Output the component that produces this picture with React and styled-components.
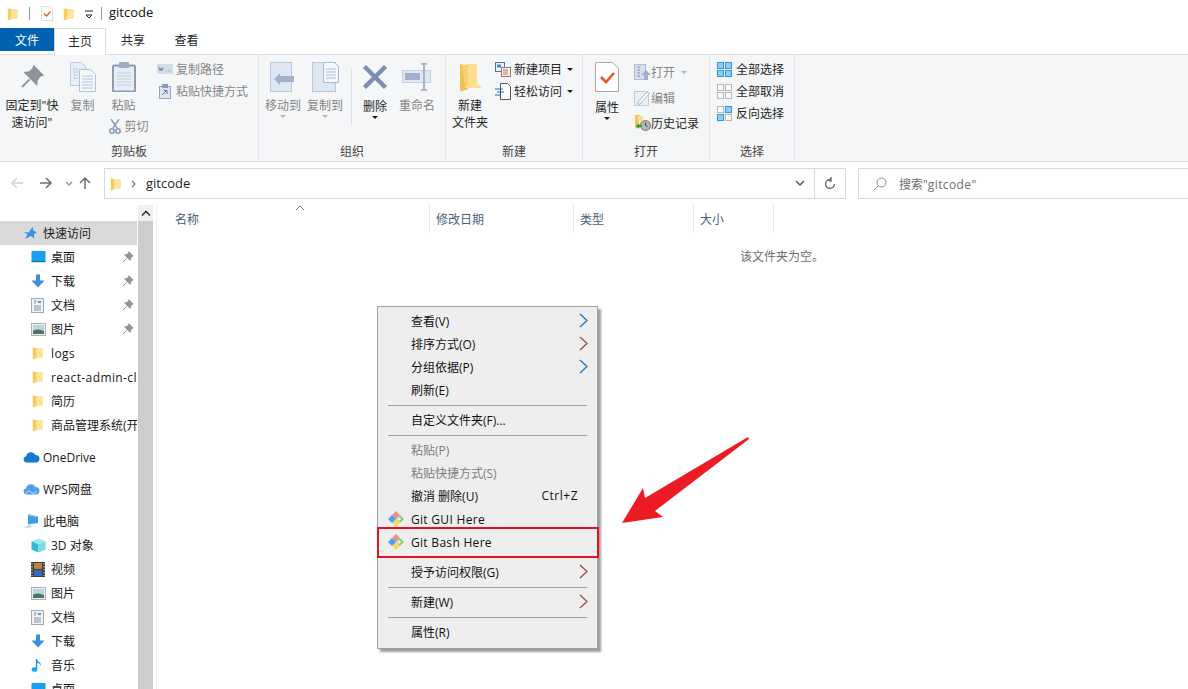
import React from "react";
import styled, { createGlobalStyle } from "styled-components";

const Global = createGlobalStyle`
  html, body { margin: 0; padding: 0; background: #fff; }
  body { font-family: "Open Sans", "Noto Sans CJK SC", sans-serif; font-size: 12px; color: #1a1a1a; }
  * { box-sizing: border-box; }
`;

const Page = styled.div`
  position: relative; width: 1188px; height: 689px; overflow: hidden; background: #fff;
  display: flex; flex-direction: column;
`;

/* title bar */
const TitleBar = styled.div`
  height: 27px; display: flex; align-items: center; padding-left: 6px; flex: none;
`;
const TitleSep = styled.span`
  width: 1px; height: 13px; background: #9b9b9b; margin: 0 ${p => p.$r}px 0 ${p => p.$l}px;
`;
const TitleText = styled.span`font-size: 13px; color: #111; line-height: 25px; height: 27px;`;
const TitleSlot = styled.span`display: flex; margin-right: ${p => p.$r || 0}px;`;

/* tabs */
const Tabs = styled.div`
  height: 28px; flex: none; display: flex; align-items: flex-start; padding-top: 1px;
  border-bottom: 1px solid #dadbdc; position: relative;
`;
const Tab = styled.div`
  height: ${p => (p.$active ? 27 : 23)}px; width: ${p => p.$w}px; display: flex; align-items: center;
  justify-content: center; padding-top: 2px; padding-bottom: ${p => (p.$active ? 3 : 0)}px; line-height: 1;
  background: ${p => (p.$file ? "#0063b1" : "transparent")};
  color: ${p => (p.$file ? "#fff" : "#262626")};
  ${p => p.$active && "background:#fff;border:1px solid #dadbdc;border-bottom:0;"}
`;

/* ribbon */
const Ribbon = styled.div`
  height: 107px; flex: none; display: flex; background: #f5f6f7; border-bottom: 1px solid #dadbdc;
`;
const Group = styled.div`
  width: ${p => p.$w}px; flex: none; display: flex; flex-direction: column; justify-content: space-between;
  border-right: 1px solid #e1e3e6; margin-bottom: 1px; padding-top: 3px;
`;
const GroupBody = styled.div`display: flex; padding-left: ${p => p.$pl || 0}px;`;
const GroupLabel = styled.div`text-align: center; color: #444; line-height: 19px; height: 18px;`;
const BigBtn = styled.div`
  width: ${p => p.$w}px; flex: none; display: flex; flex-direction: column; align-items: center;
  color: ${p => (p.$off ? "#858585" : "#262626")}; line-height: 17px; text-align: center;
  white-space: nowrap;
`;
const BigIcon = styled.div`
  height: ${p => 39 + (p.$lift || 0)}px; padding-bottom: ${p => 1 + (p.$lift || 0)}px; width: 100%; flex: none;
  display: flex; align-items: center; justify-content: center;
`;
const Drop = styled.span`
  width: 0; height: 0; border: 3px solid transparent; border-bottom: 0;
  border-top-color: ${p => (p.$off ? "#b5b5b5" : "#1a1a1a")}; margin-top: 1px; display: block;
  margin-left: ${p => p.$ml || 0}px;
`;
const SmallCol = styled.div`
  display: flex; flex-direction: column; flex: none; padding-top: ${p => p.$pt || 0}px; padding-left: ${p => p.$pl || 0}px; gap: ${p => p.$gap || 0}px;
`;
const SmallBtn = styled.div`
  height: 22px; display: flex; align-items: center; gap: ${p => p.$gap ?? 3}px; white-space: nowrap;
  color: ${p => (p.$off ? "#858585" : "#262626")}; padding-left: ${p => p.$pl || 0}px;
`;
const VSep = styled.div`width: 1px; height: 55px; background: #dcdee1; margin: 11px 0 0 ${p => p.$ml}px; flex: none;`;
const Cut = styled(SmallBtn)`margin-top: 1px; margin-left: 10px;`;
const PasteCol = styled.div`display:flex;flex-direction:column;align-items:center;width:${p => p.$w}px;flex:none;`;

/* address */
const AddressRow = styled.div`height: 43px; flex: none; display: flex; align-items: flex-start; padding-top: 6px;`;
const Nav = styled.div`width: 104px; height: 30px; flex: none; display: flex; align-items: center; padding-left: 10px;`;
const NavSlot = styled.span`display: flex; margin-left: ${p => p.$l || 0}px;`;
const AddressBox = styled.div`
  width: 742px; height: 31px; flex: none; border: 1px solid #d9d9d9; display: flex; align-items: center; padding-left: 4px;
`;
const Crumb = styled.span`flex: 1; font-size: 13px; color: #1f1f1f; margin-left: 9px; padding-bottom: 2px;`;
const AddrBtn = styled.div`
  width: ${p => p.$w}px; height: 100%; display: flex; align-items: center; justify-content: center;
  ${p => p.$line && "border-left:1px solid #d9d9d9;"}
`;
const SearchBox = styled.div`
  margin-left: 12px; flex: 1; height: 31px; border: 1px solid #d9d9d9; border-right: 0; display: flex; align-items: center;
  padding-left: 14px; gap: 12px; color: #6d6d6d;
`;
const Wide = styled.span`letter-spacing: .4px;`;

/* main */
const Main = styled.div`flex: 1; display: flex; min-height: 0;`;
const Side = styled.div`width: 138px; flex: none; padding-top: 16px; overflow: hidden;`;
const Row = styled.div`
  height: 24px; width: 137px; display: flex; align-items: center; white-space: nowrap; overflow: hidden;
  padding-left: ${p => (p.$top ? 23 : 31)}px; margin-top: ${p => (p.$gap ? 8 : 0)}px;
  background: ${p => (p.$sel ? "#d9d9d9" : "transparent")}; color: #1a1a1a; flex: none;
`;
const RowIcon = styled.span`width: 20px; flex: none; display: flex;`;
const RowText = styled.span`flex: 1; overflow: hidden; min-width: 0;`;
const PinSlot = styled.span`display: flex; flex: none; padding-right: 3px;`;
const Scroll = styled.div`width: 15px; flex: none; background: #cdcdcd; display: flex; flex-direction: column;`;
const ScrollTop = styled.div`height: 16px; background: #f0f0f0; display: flex; align-items: center; justify-content: center;`;
const Pane = styled.div`flex: 1; border-left: 1px solid #f0f0f0; margin-left: 3px; min-width: 0;`;
const Head = styled.div`display: flex; height: 28px; position: relative;`;
const HeadCell = styled.div`
  width: ${p => p.$w}px; flex: none; padding-left: ${p => p.$pl || 6}px; color: #4c607a; line-height: 30px;
  border-right: 1px solid #e5e5e5;
`;
const SortCaret = styled.svg`position: absolute; left: 138px; top: 0;`;
const Empty = styled.div`padding: 15px 0 0 583px; color: #6d6d6d; line-height: 18px;`;

/* menu */
const Menu = styled.div`
  position: absolute; left: 377px; top: 306px; width: 221px; height: 343px; padding-top: 3px;
  background: #eeeeee; border: 1px solid #a0a0a0; box-shadow: 3px 3px 2px rgba(0,0,0,.38);
`;
const Item = styled.div`
  height: 23px; display: flex; align-items: center; padding-left: 33px; position: relative;
  padding-bottom: ${p => (p.$git ? 0 : 2)}px;
  letter-spacing: ${p => (p.$git ? ".3px" : "0")};
  color: ${p => (p.$off ? "#7d7d7d" : "#111")}; white-space: nowrap;
`;
const Short = styled.span`position: absolute; right: 19px; letter-spacing: .5px;`;
const Chevron = styled.svg`position: absolute; left: 201px; top: 3px;`;
const GitSlot = styled.span`position: absolute; left: 9px; top: 2px; display: flex;`;
const MenuSep = styled.div`height: 7px; margin: 0 10px; display: flex; align-items: center; &::after { content: ""; flex: 1; height: 1px; background: #a0a0a0; }`;
const MenuGap = styled.div`height: 7px;`;
const RedBox = styled.div`position: absolute; left: -1px; top: 220px; width: 222px; height: 31px; border: 2px solid #e81123;`;
const ArrowSvg = styled.svg`position: absolute; left: 620px; top: 435px;`;

/* icons */
const Folder = ({ s = 16 }) => (
  <svg width={s} height={s} viewBox="0 0 16 16">
    <path d="M2 1.500 L7 2.500 V14 L2 15.500 Z" fill="#f6cd63" />
    <path d="M6 2.500 H13.500 V13.500 H3.500 L6 12 Z" fill="#fde39a" />
  </svg>
);
const Pin = ({ s = 12, c = "#8d949c" }) => (
  <svg width={s} height={s} viewBox="0 0 12 12"><path d="M7 .8 11.2 5 9.800 5.600 8.400 7.600 8.200 9.400 2.700 3.900 4.600 3.600 6.500 2.200Z M4.800 7.200 1 11" fill={c} stroke={c} strokeWidth="1" /></svg>
);
const QuickStar = () => (
  <svg width="14" height="14" viewBox="0 0 14 14"><path d="M9.500 .8 10.500 4.800 14 6l-3 2.300.2 4.200-3.300-2.400L2.200 13 4.500 8.500 1 6.200l5 .1Z" fill="#3a94e3" /></svg>
);
const Desk = () => (
  <svg width="15" height="14" viewBox="0 0 15 14"><rect x=".5" y="1" width="14" height="11" rx="1" fill="#18a0f0" /><path d="M.5 11h14v1.200H.5z" fill="#0d6fb8" /></svg>
);
const Down = ({ w = 14 }) => (
  <svg width={w} height="14" viewBox="0 0 14 14"><path d="M5 .5h4v6h4.500L7 13.500.5 6.500H5Z" fill="#3b8edb" /></svg>
);
const Doc = () => (
  <svg width="13" height="15" viewBox="0 0 13 15"><rect x=".5" y=".5" width="12" height="14" fill="#f3f3f3" stroke="#a9a9a9" /><path d="M3 3h3M3 5h2M3 8h7M3 10h7M3 12h7" stroke="#7f9bb5" /><path d="M7 3h3v2H7z" fill="#4e9bd8" /></svg>
);
const Pic = () => (
  <svg width="15" height="13" viewBox="0 0 15 13"><rect x=".5" y=".5" width="14" height="12" fill="#eee" stroke="#b0b0b0" /><rect x="2" y="2" width="11" height="9" fill="#b9d3e0" /><path d="M2 8c3-2 7-2 11 0v3H2Z" fill="#4c7363" /></svg>
);
const Cloud = ({ c = "#1479cf" }) => (
  <svg width="17" height="12" viewBox="0 0 17 12"><path d="M3.500 11.500a3.200 3.200 0 0 1-.4-6.300 5 5 0 0 1 9.400-1.200A3.800 3.800 0 0 1 13.500 11.500Z" fill={c} /></svg>
);
const Wps = () => (
  <svg width="17" height="12" viewBox="0 0 17 12"><path d="M3.500 11.500a3.200 3.200 0 0 1-.4-6.300 5 5 0 0 1 9.400-1.200A3.800 3.800 0 0 1 13.500 11.500Z" fill="#4d9df0" /><path d="M3 11c1-3 3-4 5-2s4 1 6-1" stroke="#cfe6ff" fill="none" /></svg>
);
const PC = () => (
  <svg width="16" height="16" viewBox="0 0 16 16"><path d="M5 1l10 2.500V10L5 11.500Z" fill="#3aa0e0" /><path d="M5 1l10 2.500-1 .6L5 2.500Z" fill="#9fd4f5" /><path d="M0 14l7-2 4 1-6 2.400Z" fill="#d8d8d8" /></svg>
);
const Obj3D = () => (
  <svg width="15" height="15" viewBox="0 0 15 15"><path d="M7.500 .5l7 2.800-7 3-7-3Z" fill="#9be8ee" /><path d="M.5 3.300l7 3v8.200l-7-3Z" fill="#2ec0d0" /><path d="M14.500 3.300l-7 3v8.200l7-3Z" fill="#7adbe4" /></svg>
);
const Film = () => (
  <svg width="14" height="15" viewBox="0 0 14 15"><rect width="14" height="15" fill="#3d3d3d" /><rect x="3" y="1" width="8" height="6" fill="#c0813f" /><rect x="3" y="8" width="8" height="6" fill="#3567c4" /><path d="M1 1v13M13 1v13" stroke="#ddd" strokeDasharray="1.500 1.500" /></svg>
);
const Note = () => (
  <svg width="13" height="15" viewBox="0 0 13 15"><path d="M5.500 1v10" stroke="#1aa0ee" strokeWidth="1.500" /><path d="M5.500 1c1 3 5 3 4.500 7-.8-2.400-2.500-3-4.500-3.500Z" fill="#1aa0ee" /><ellipse cx="3.500" cy="11.500" rx="2.800" ry="2.300" fill="#1aa0ee" /></svg>
);

const BigDoc = ({ o = 1 }) => (
  <svg width="26" height="30" viewBox="0 0 26 30" opacity={o}>
    <path d="M.5.5h11l4 4v19H.5Z" fill="#e9eff8" stroke="#bac8dc" />
    <path d="M9.500 7.500h11l5 5v17h-16Z" fill="#f4f7fb" stroke="#b0c0d8" />
    <path d="M3 7h5M3 10h5M3 13h5M3 16h5M12 14h11M12 17h11M12 20h11M12 23h11M12 26h11" stroke="#b4c4dc" />
  </svg>
);
const Clip = () => (
  <svg width="24" height="30" viewBox="0 0 24 30">
    <rect x="1" y="3.500" width="22" height="26" rx="1" fill="#e7ecf5" stroke="#8b9db9" strokeWidth="2" />
    <rect x="7" y="0" width="10" height="6" fill="#9fafc6" />
    <path d="M5 11h14M5 14h14M5 17h14M5 20h14M5 23h14" stroke="#c4d0e2" />
  </svg>
);
const MoveIco = () => (
  <svg width="26" height="30" viewBox="0 0 26 30">
    <rect x=".5" y=".5" width="21" height="29" fill="#dde6f3" stroke="#b8c7dc" />
    <path d="M10 17l-6 6 6 6v-3h14v-6H10Z" fill="#9fb2ca" transform="translate(0,-6)" />
  </svg>
);
const CopyToIco = () => (
  <svg width="27" height="30" viewBox="0 0 27 30">
    <rect x=".5" y=".5" width="23" height="29" fill="#dde6f3" stroke="#b8c7dc" />
    <path d="M11.500 .5h11l4 4v16h-15Z" fill="#f4f7fb" stroke="#a9b9d0" />
    <path d="M14 7h10M14 10h10M14 13h10M14 16h10" stroke="#a9b9d0" />
  </svg>
);
const XIco = () => (
  <svg width="26" height="26" viewBox="0 0 26 26"><path d="M2.500 2.500 23.500 23.500M23.500 2.500 2.500 23.500" stroke="#7b8db0" strokeWidth="4.500" /></svg>
);
const RenameIco = () => (
  <svg width="30" height="28" viewBox="0 0 30 28">
    <rect x=".5" y="7.500" width="28" height="12" fill="#dfe7f3" stroke="#c3d0e1" />
    <rect x="3" y="10" width="15" height="7" fill="#9fb1cd" />
    <path d="M19 .8h6M22 1v26M19 27h6" stroke="#a7b5c9" strokeWidth="2" />
  </svg>
);
const BigFolder = () => (
  <svg width="22" height="29" viewBox="0 0 22 29">
    <path d="M1 1l8 2v23l-7 2.500L1 27Z" fill="#f0c14e" />
    <path d="M7 1h11v20l4 2v2H5l3-2Z" fill="#fde08f" />
    <path d="M3 2h6v20l-3 2Z" fill="#f8d271" />
  </svg>
);
const CheckDoc = ({ w = 24, h = 30 }) => (
  <svg width={w} height={h} viewBox="0 0 24 30">
    <path d="M.5.5h17l6 6v23H.5Z" fill="#fff" stroke="#a9a9a9" />
    <path d="M6 15l5 5 8-9" fill="none" stroke="#e8562a" strokeWidth="2.600" />
  </svg>
);
const PathIco = () => (
  <svg width="16" height="10" viewBox="0 0 16 10"><rect width="16" height="10" fill="#d3dce9" /><path d="M2 3l1 4 1-3 1 3 1-4M9 7h.8M11 7h.8M13 7h.8" stroke="#6f7f97" fill="none" strokeWidth=".8" /></svg>
);
const ShortIco = () => (
  <svg width="12" height="15" viewBox="0 0 12 15"><rect x=".5" y="2.500" width="11" height="12" fill="#dfe6f1" stroke="#92a3bc" /><rect x="3" y="0" width="6" height="4" fill="#8b9db9" /><path d="M3 11l4-4M5 6.500h3V10" stroke="#5c7396" fill="none" /></svg>
);
const Scissors = () => (
  <svg width="12" height="15" viewBox="0 0 12 15"><path d="M2 0l6 9M10 0 4 9" stroke="#8e9db3" strokeWidth="1.500" /><circle cx="3" cy="12" r="2.200" fill="none" stroke="#8697b0" strokeWidth="1.500" /><circle cx="9" cy="12" r="2.200" fill="none" stroke="#8697b0" strokeWidth="1.500" /></svg>
);
const NewItem = () => (
  <svg width="16" height="15" viewBox="0 0 16 15"><rect x=".5" y=".5" width="9" height="9" fill="#e8f0f8" stroke="#5d7180" /><rect x="2" y="2.500" width="4" height="3" fill="#3f8fd4" /><rect x="6.500" y="5.500" width="9" height="9" fill="#f6f0ee" stroke="#8c7a80" /><path d="M8 8h5M8 10h5M8 12h5" stroke="#d36c4f" /></svg>
);
const EasyIco = () => (
  <svg width="16" height="17" viewBox="0 0 16 17"><path d="M5.500 .5h7l3 3v13h-10Z" fill="#fff" stroke="#555" /><path d="M0 6h8M2 9h7M0 12h6" stroke="#1c6fb5" /></svg>
);
const OpenIco = () => (
  <svg width="17" height="16" viewBox="0 0 17 16"><rect x=".5" y=".5" width="11" height="15" fill="#d6dfeb" stroke="#b0bdcf" /><path d="M3 3h3M3 6h3M3 9h3M3 12h3" stroke="#7f92ad" /><path d="M12 6l5 5h-3v5h-4v-5H7Z" fill="#9fb1c9" /></svg>
);
const EditIco = () => (
  <svg width="16" height="16" viewBox="0 0 16 16"><path d="M.5 1.500h11l3 .5v13.500H.5Z" fill="#eaf0f7" stroke="#bccadc" /><path d="M4 12l9-10 2.500 1.500L6 14l-2 .5Z" fill="#fff" stroke="#a8b9cf" /></svg>
);
const History = () => (
  <svg width="17" height="16" viewBox="0 0 17 16"><path d="M1 0h5v13H1Z" fill="#f2c652" /><path d="M4 1h5v11H4Z" fill="#fde08f" /><circle cx="11.500" cy="10.500" r="5" fill="#b5b5b5" stroke="#777" /><path d="M11.500 7.500v3l2 1" stroke="#444" fill="none" /><path d="M2 11l3-3v2h3v2H5v2Z" fill="#2e9e3a" /></svg>
);
const Grid4 = ({ on = [1, 1, 1, 1] }) => (
  <svg width="15" height="15" viewBox="0 0 15 15">
    {[[0, 0], [8, 0], [0, 8], [8, 8]].map(([x, y], i) => (
      <rect key={i} x={x + 0.5} y={y + 0.5} width="6" height="6" fill={on[i] ? "#8ecbf6" : "#fafafa"} stroke={on[i] ? "#2f95e6" : "#b9b9b9"} />
    ))}
  </svg>
);
const ChevronRight = ({ c }) => (
  <Chevron width="9" height="15" viewBox="0 0 9 15"><path d="M1 1l7 6.500-7 6.500" fill="none" stroke={c} strokeWidth="1.200" /></Chevron>
);
const GitLogo = () => (
  <svg width="18" height="18" viewBox="0 0 18 18">
    <path d="M9 1l4 4-4 4-4-4Z" fill="#f28c8c" />
    <path d="M13 5l4 4-4 4-4-4Z" fill="#86d06a" />
    <path d="M9 9l4 4-4 4-4-4Z" fill="#f9da5b" />
    <path d="M5 5l4 4-4 4-4-4Z" fill="#4f9ef5" />
    <path d="M10.500 7.500h3v3h-3z" fill="#eee" transform="rotate(45 12 9)" />
  </svg>
);
const Small = ({ d, c = "#666", w = 14, h = 14, vb = "0 0 14 14", sw = 1.500 }) => (
  <svg width={w} height={h} viewBox={vb}><path d={d} fill="none" stroke={c} strokeWidth={sw} /></svg>
);

const quick = [
  [<Desk />, "桌面", 1], [<Down />, "下载", 1], [<Doc />, "文档", 1], [<Pic />, "图片", 1],
  [<Folder s={14} />, <Wide>logs</Wide>, 0, "logs"], [<Folder s={14} />, <Wide>react-admin-client</Wide>, 0, "react"], [<Folder s={14} />, "简历"], [<Folder s={14} />, "商品管理系统(开发中)"],
];
const pc = [
  [<Obj3D />, "3D 对象"], [<Film />, "视频"], [<Pic />, "图片"], [<Doc />, "文档"], [<Down />, "下载"], [<Note />, "音乐"], [<Desk />, "桌面"],
];

export default function App() {
  return (
    <Page>
      <Global />
      <TitleBar>
        <TitleSlot><Folder s={14} /></TitleSlot>
        <TitleSep $l={9} $r={11} />
        <TitleSlot $r={9}><CheckDoc w={12} h={15} /></TitleSlot>
        <TitleSlot $r={8}><Folder s={14} /></TitleSlot>
        <TitleSlot $r={7}><Small d="M1 2h8M2 6h6l-3 3Z" c="#222" w={10} h={10} vb="0 0 10 10" sw={1} /></TitleSlot>
        <TitleSep $l={0} $r={7} />
        <TitleText>gitcode</TitleText>
      </TitleBar>
      <Tabs>
        <Tab $file $w={54}>文件</Tab>
        <Tab $active $w={52}>主页</Tab>
        <Tab $w={54}>共享</Tab>
        <Tab $w={53}>查看</Tab>
      </Tabs>
      <Ribbon>
        <Group $w={259}>
          <GroupBody>
            <BigBtn $w={64}><BigIcon><Pin s={24} /></BigIcon>固定到"快<br />速访问"</BigBtn>
            <BigBtn $w={37} $off><BigIcon><BigDoc /></BigIcon>复制</BigBtn>
            <PasteCol $w={45}>
              <BigBtn $w={45} $off><BigIcon><Clip /></BigIcon>粘贴</BigBtn>
              <Cut $off $gap={4}><Scissors />剪切</Cut>
            </PasteCol>
            <SmallCol $pl={11}>
              <SmallBtn $off><PathIco />复制路径</SmallBtn>
              <SmallBtn $off $gap={5} $pl={2}><ShortIco />粘贴快捷方式</SmallBtn>
            </SmallCol>
          </GroupBody>
          <GroupLabel>剪贴板</GroupLabel>
        </Group>
        <Group $w={187}>
          <GroupBody $pl={3}>
            <BigBtn $w={42} $off><BigIcon><MoveIco /></BigIcon>移动到<Drop $off /></BigBtn>
            <BigBtn $w={42} $off><BigIcon><CopyToIco /></BigIcon>复制到<Drop $off /></BigBtn>
            <VSep $ml={5} />
            <BigBtn $w={46}><BigIcon $lift={1}><XIco /></BigIcon>删除<Drop /></BigBtn>
            <BigBtn $w={38} $off><BigIcon><RenameIco /></BigIcon>重命名</BigBtn>
          </GroupBody>
          <GroupLabel>组织</GroupLabel>
        </Group>
        <Group $w={137}>
          <GroupBody>
            <BigBtn $w={48}><BigIcon><BigFolder /></BigIcon>新建<br />文件夹</BigBtn>
            <SmallCol $pl={1}>
              <SmallBtn><NewItem />新建项目<Drop $ml={2} /></SmallBtn>
              <SmallBtn><EasyIco />轻松访问<Drop $ml={2} /></SmallBtn>
            </SmallCol>
          </GroupBody>
          <GroupLabel>新建</GroupLabel>
        </Group>
        <Group $w={127}>
          <GroupBody>
            <BigBtn $w={48}><BigIcon $lift={2}><CheckDoc /></BigIcon>属性<Drop /></BigBtn>
            <SmallCol $pl={3} $pt={3} $gap={3.5}>
              <SmallBtn $off $gap={0}><OpenIco />打开<Drop $off $ml={6} /></SmallBtn>
              <SmallBtn $off $gap={1}><EditIco />编辑</SmallBtn>
              <SmallBtn $gap={0}><History />历史记录</SmallBtn>
            </SmallCol>
          </GroupBody>
          <GroupLabel>打开</GroupLabel>
        </Group>
        <Group $w={85}>
          <GroupBody $pl={7}>
            <SmallCol>
              <SmallBtn $gap={4}><Grid4 />全部选择</SmallBtn>
              <SmallBtn $gap={4}><Grid4 on={[0, 0, 0, 0]} />全部取消</SmallBtn>
              <SmallBtn $gap={4}><Grid4 on={[0, 1, 1, 0]} />反向选择</SmallBtn>
            </SmallCol>
          </GroupBody>
          <GroupLabel>选择</GroupLabel>
        </Group>
      </Ribbon>
      <AddressRow>
        <Nav>
          <NavSlot><Small d="M13 7H2M7 2 2 7l5 5" c="#d4d4d4" /></NavSlot>
          <NavSlot $l={15}><Small d="M1 7h11M7 2l5 5-5 5" c="#6e6e6e" /></NavSlot>
          <NavSlot $l={12}><Small d="M1 2l3 3 3-3" c="#9a9a9a" w={8} h={7} vb="0 0 8 7" /></NavSlot>
          <NavSlot $l={5}><Small d="M7 13V2M2 7l5-5 5 5" c="#6e6e6e" /></NavSlot>
        </Nav>
        <AddressBox>
          <Folder s={14} />
          <NavSlot $l={8}><Small d="M1 1l3 3-3 3" c="#777" w={6} h={8} vb="0 0 6 8" sw={1.200} /></NavSlot>
          <Crumb>gitcode</Crumb>
          <AddrBtn $w={28}><Small d="M1 1l4 4 4-4" c="#555" w={10} h={7} vb="0 0 10 7" /></AddrBtn>
          <AddrBtn $w={31} $line><Small d="M11.500 7a4.500 4.500 0 1 1-3-4.300M8 0v4.200L4.800 3" c="#666" sw={1.300} /></AddrBtn>
        </AddressBox>
        <SearchBox>
          <Small d="M5.500 8.500 1 13M8.500 1a4.500 4.500 0 1 1 0 9 4.500 4.500 0 0 1 0-9Z" c="#8a8a8a" sw={1} />
          <span>搜索"<Wide>gitcode</Wide>"</span>
        </SearchBox>
      </AddressRow>
      <Main>
        <Side>
          <Row $top $sel><RowIcon><QuickStar /></RowIcon><RowText>快速访问</RowText></Row>
          {quick.map(([ic, t, pin, k]) => (
            <Row key={k || t}><RowIcon>{ic}</RowIcon><RowText>{t}</RowText>{pin ? <PinSlot><Pin /></PinSlot> : null}</Row>
          ))}
          <Row $top $gap><RowIcon><Cloud /></RowIcon><RowText>OneDrive</RowText></Row>
          <Row $top $gap><RowIcon><Wps /></RowIcon><RowText>WPS网盘</RowText></Row>
          <Row $top $gap><RowIcon><PC /></RowIcon><RowText>此电脑</RowText></Row>
          {pc.map(([ic, t]) => (
            <Row key={t}><RowIcon>{ic}</RowIcon><RowText>{t}</RowText></Row>
          ))}
        </Side>
        <Scroll>
          <ScrollTop><Small d="M1 5l4-4 4 4" c="#333" w={10} h={7} vb="0 0 10 6" sw={1.600} /></ScrollTop>
        </Scroll>
        <Pane>
          <Head>
            <SortCaret width="10" height="6" viewBox="0 0 10 6"><path d="M1 5l4-4 4 4" fill="none" stroke="#8d8d8d" /></SortCaret>
            <HeadCell $w={273} $pl={18}>名称</HeadCell>
            <HeadCell $w={144}>修改日期</HeadCell>
            <HeadCell $w={120}>类型</HeadCell>
            <HeadCell $w={80}>大小</HeadCell>
          </Head>
          <Empty>该文件夹为空。</Empty>
        </Pane>
      </Main>

      <Menu>
        <Item>查看(V)<ChevronRight c="#2b6ca3" /></Item>
        <Item>排序方式(O)<ChevronRight c="#a04545" /></Item>
        <Item>分组依据(P)<ChevronRight c="#2b6ca3" /></Item>
        <Item>刷新(E)</Item>
        <MenuSep />
        <Item>自定义文件夹(F)...</Item>
        <MenuSep />
        <Item $off>粘贴(P)</Item>
        <Item $off>粘贴快捷方式(S)</Item>
        <Item>撤消 删除(U)<Short>Ctrl+Z</Short></Item>
        <Item $git><GitSlot><GitLogo /></GitSlot>Git GUI Here</Item>
        <Item $git><GitSlot><GitLogo /></GitSlot>Git Bash Here</Item>
        <MenuGap />
        <Item>授予访问权限(G)<ChevronRight c="#a04545" /></Item>
        <MenuSep />
        <Item>新建(W)<ChevronRight c="#a04545" /></Item>
        <MenuSep />
        <Item>属性(R)</Item>
        <RedBox />
      </Menu>
      <ArrowSvg width="132" height="92" viewBox="620 435 132 92">
        <path d="M748 437 749 439 655 511 663 517 622 523 643 488 645 498Z" fill="#ed1c24" />
      </ArrowSvg>
    </Page>
  );
}
